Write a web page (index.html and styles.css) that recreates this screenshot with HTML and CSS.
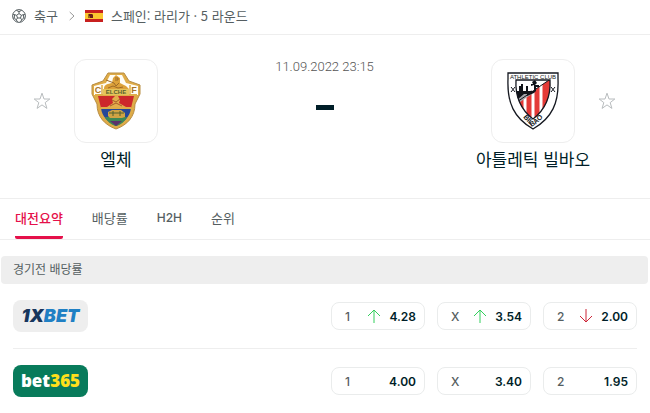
FILE: index.html
```html
<!DOCTYPE html>
<html lang="ko">
<head>
<meta charset="utf-8">
<meta name="viewport" content="width=device-width, initial-scale=1">
<title>엘체 - 아틀레틱 빌바오</title>
<link rel="stylesheet" href="styles.css">
</head>
<body>
<nav class="breadcrumb" aria-label="경로">
  <svg class="ball" viewBox="0 0 14 14" aria-hidden="true"><circle cx="7" cy="7" r="6.4"/><path d="M7 4.6 9.4 6.3 8.5 9H5.5L4.6 6.3ZM7 4.6V2.7M9.4 6.3l2-.7M8.5 9l1.2 1.8M5.5 9l-1.2 1.8M4.6 6.3l-2-.7M4.3 1.3 7 2.7l2.7-1.4M13.1 5.2l-1.7.4.4 3.4 1 .4M8.5 13l1.2-2.2 2.1-1.8M5.5 13l-1.2-2.2L2.2 9l-1 .4M.9 5.2l1.7.4L2.2 9"/></svg>
  <a href="#">축구</a>
  <svg class="chevron" viewBox="0 0 6 10" aria-hidden="true"><path d="M.7 1 5 5 .7 9"/></svg>
  <svg class="flag" viewBox="0 0 18 12" aria-hidden="true"><path fill="#c8201f" d="M0 0h18v12H0z"/><path fill="#fcc630" d="M0 3h18v6H0z"/><path fill="#9c6b18" d="M3 4h5v4H3z"/><path fill="#6b1d18" d="M4 4h3v1h1v3H5V6H4z"/></svg>
  <a href="#">스페인: 라리가 · 5 라운드</a>
</nav>

<header class="match">
  <button class="star" aria-label="엘체 즐겨찾기"><svg viewBox="0 0 18 18"><path d="M9 1.2 11 7h5.8l-4.6 3.6 1.7 5.8L9 12.9l-4.9 3.5 1.7-5.8L1.2 7H7Z"/></svg></button>
  <div class="team">
    <a class="crest" href="#" aria-label="엘체">
      <svg viewBox="0 0 60 60" aria-hidden="true">
        <path d="M22 2h16l5 8 11 4v9l-5 10c0 13-8 21-19 25C19 54 11 46 11 33L6 23v-9l11-4Z" fill="#dfac48" stroke="#b88d43"/>
        <path d="M24 4h12l4 8 12 3v9H8v-9l12-3Z" fill="#fffdf5"/>
        <path d="M12 25h36l-3 12H15Z" fill="#cc282b"/>
        <path d="M15 37h30c-1 9-7 14-15 18-8-4-14-9-15-18Z" fill="#254798"/>
        <path d="M19 46h22c-2 4-6 8-11 9-5-1-9-5-11-9Z" fill="#3d8855"/>
        <path d="m24 50 6 5 6-5Z" fill="#5b326c"/>
        <path d="M18 18c0-5 4-5 8-6l1-5 3-3 4 3v5l6 3 3 3Z" fill="#dda23a"/>
        <path d="m20 9 8 3 2 3 3-3M22 17l5-2 5 2 5-1M29 7h3v2h-3" stroke="#9f6b27"/>
        <path d="m21 36 6-4-1-4 3-3h3l2 4-1 3 7 4Z" fill="#e3ad4b"/>
        <path d="m26 29 4 2 4-3M24 35l6-3 6 3" stroke="#a65c29"/>
        <path d="M22 45v-4l4-2h9l4 3v4l-3 1H24Z" fill="#d0a344"/>
        <path d="M23 42h15M27 40v5M34 40v5" stroke="#50602f"/>
        <path d="M15 37h30M9 24h42" stroke="#dfac48" stroke-width="2"/>
        <path d="M17 18h26v6H17z" fill="#e5c45b"/>
        <path d="M16 14v10M44 14v10" stroke="#dfac48" stroke-width="1.5"/>
        <g class="crest-gold"><text x="12" y="22">C</text><text x="48" y="22">F</text></g>
        <text class="crest-elche" x="30" y="23">ELCHE</text>
      </svg>
    </a>
    <a class="team-name" href="#">엘체</a>
  </div>
  <div class="score">
    <time datetime="2022-09-11T23:15">11.09.2022 23:15</time>
    <span class="dash" role="img" aria-label="점수 없음"></span>
  </div>
  <div class="team">
    <a class="crest" href="#" aria-label="아틀레틱 빌바오">
      <svg viewBox="0 0 60 60" aria-hidden="true">
        <defs><clipPath id="shield"><path d="M13 9h34c1 17-4 29-17 39C17 38 12 26 13 9Z"/></clipPath><path id="motto" d="M15 38Q21 50 30 55Q39 50 45 38"/></defs>
        <path d="M5 2h50v6c1 24-6 39-25 50C11 47 4 32 5 8Z" fill="#fff" stroke="#151820" stroke-width="1.3"/>
        <g clip-path="url(#shield)">
          <path d="M11 7h38v44H11z" fill="#fff"/>
          <path d="M11 33 49 7v44H11Z" fill="#e43a37"/>
          <path d="M22 24v27M30 19v32M38 14v37" stroke="#fff" stroke-width="3"/>
          <path d="M12 27 29 19v4L14 33Z" fill="#a4a6aa"/>
          <path d="M13 24v-4h3v-5h2v-2h2v7h3v-5h2v8h-4l-7 6ZM29 11l3-2 2 3-2 2h4v2h-3v4l-2 2v-8l-3 1v-2h2ZM24 20h7v2l-7 3Z" fill="#101319"/>
          <path d="M11 33 49 7" stroke="#151820"/>
        </g>
        <path d="M13 9h34c1 17-4 29-17 39C17 38 12 26 13 9Z" stroke="#151820" stroke-width="1.3"/>
        <path d="m8 16 4 5m0-5-4 5M48 16l4 5m0-5-4 5" stroke="#151820"/>
        <text class="crest-club" x="30" y="8">ATHLETIC CLUB</text>
        <text class="crest-motto"><textPath href="#motto" startOffset="50%">BILBAO</textPath></text>
      </svg>
    </a>
    <a class="team-name" href="#">아틀레틱 빌바오</a>
  </div>
  <button class="star" aria-label="아틀레틱 빌바오 즐겨찾기"><svg viewBox="0 0 18 18"><path d="M9 1.2 11 7h5.8l-4.6 3.6 1.7 5.8L9 12.9l-4.9 3.5 1.7-5.8L1.2 7H7Z"/></svg></button>
</header>

<nav class="tabs" aria-label="경기 정보">
  <a class="active" href="#" aria-current="page">대전요약</a>
  <a href="#">배당률</a>
  <a class="latin" href="#">H2H</a>
  <a href="#">순위</a>
</nav>

<main>
  <h2 class="section-title">경기전 배당률</h2>
  <ul class="odds">
    <li class="odds-row">
      <a class="bookmaker onexbet" href="#"><span>1X</span>BET</a>
      <div class="prices">
        <button class="price"><span class="pick">1</span><svg class="trend up" viewBox="0 0 14 16" aria-label="상승"><path d="M7 15V2M1 8l6-6 6 6"/></svg><span>4.28</span></button>
        <button class="price"><span class="pick">X</span><svg class="trend up" viewBox="0 0 14 16" aria-label="상승"><path d="M7 15V2M1 8l6-6 6 6"/></svg><span>3.54</span></button>
        <button class="price"><span class="pick">2</span><svg class="trend down" viewBox="0 0 14 16" aria-label="하락"><path d="M7 1v13M1 8l6 6 6-6"/></svg><span>2.00</span></button>
      </div>
    </li>
    <li class="odds-row">
      <a class="bookmaker bet365" href="#">bet<span>365</span></a>
      <div class="prices">
        <button class="price"><span class="pick">1</span><span>4.00</span></button>
        <button class="price"><span class="pick">X</span><span>3.40</span></button>
        <button class="price"><span class="pick">2</span><span>1.95</span></button>
      </div>
    </li>
  </ul>
</main>
</body>
</html>
```
FILE: styles.css
```css
* { box-sizing: border-box; }

body {
  margin: 0;
  background: #fff;
  color: #001e28;
  font-family: Inter, "Noto Sans CJK KR", sans-serif;
  font-size: 12px;
}

a { color: inherit; text-decoration: none; }
button { font: inherit; color: inherit; background: none; cursor: pointer; }
svg { display: block; flex: none; fill: none; }

.breadcrumb {
  display: flex;
  align-items: center;
  height: 35px;
  padding: 0 12px 3px;
  border-bottom: 1px solid #eee;
  color: #555e61;
  font-family: "Noto Sans CJK KR", sans-serif;
  font-size: 13px;
}
.ball { width: 14px; height: 14px; margin-right: 8px; stroke: #555e61; stroke-width: 1; }
.chevron { width: 6px; height: 10px; margin: 0 10px 0 11px; stroke: #999; }
.flag { width: 18px; height: 12px; margin-right: 8px; }

.match {
  display: flex;
  justify-content: space-between;
  padding: 24px 34px 27px 33px;
  border-bottom: 1px solid #eee;
}
.star { width: 18px; height: 84px; padding: 0; border: 0; }
.star svg { width: 18px; height: 18px; stroke: #b8bcbe; }
.team {
  display: flex;
  flex-direction: column;
  align-items: center;
  width: 130px;
}
.crest {
  display: grid;
  place-items: center;
  width: 84px;
  height: 84px;
  border: 1px solid #eee;
  border-radius: 12px;
}
.crest svg { width: 60px; height: 60px; }
.crest text { font-family: "Liberation Sans", sans-serif; text-anchor: middle; }
.crest-gold { fill: #a8742a; font-size: 9px; font-weight: 700; }
.crest-elche { fill: #59602d; font-size: 6px; font-weight: 700; }
.crest-club { fill: #151820; font-size: 6px; }
.crest-motto { fill: #151820; font-size: 7px; font-weight: 700; }
.team-name {
  margin-top: 4px;
  font-family: "Noto Sans CJK KR", sans-serif;
  font-size: 17px;
  line-height: 24px;
  white-space: nowrap;
}
.score { flex: 1; display: flex; flex-direction: column; align-items: center; }
.score time { color: #555; font-family: Roboto, sans-serif; font-size: 13px; font-weight: 300; line-height: 16px; }
.dash { width: 18px; height: 5px; margin-top: 30px; background: #001e28; }

.tabs {
  display: flex;
  gap: 29px;
  height: 41px;
  padding: 0 15px;
  border-bottom: 1px solid #eee;
  color: #555e61;
  font-size: 13px;
  line-height: 38px;
}
.tabs a { border-bottom: 3px solid transparent; }
.tabs .active { border-color: #e5104a; border-radius: 2px; color: #e5104a; font-weight: 500; }
.tabs .latin { font-size: 12px; font-weight: 500; }

.section-title {
  margin: 16px 2px 0 1px;
  padding: 0 12px;
  border-radius: 4px;
  background: #eee;
  color: #555e61;
  font-size: 12px;
  font-weight: 400;
  line-height: 28px;
}

.odds { margin: 0 13px; padding: 0; list-style: none; }
.odds-row {
  display: flex;
  align-items: center;
  justify-content: space-between;
  padding: 16px 0;
}
.odds-row + .odds-row { border-top: 1px solid #eee; }
.bookmaker {
  width: 75px;
  height: 32px;
  border-radius: 8px;
  line-height: 32px;
  text-align: center;
}
.onexbet { background: #eee; color: #1f80c4; font-size: 18px; font-style: italic; font-weight: 900; }
.onexbet span { color: #17365d; }
.bet365 { background: #087b5b; color: #fff; font-family: "Open Sans", sans-serif; font-size: 17px; font-weight: 800; }
.bet365 span { color: #ffdf1b; }
.prices { display: flex; gap: 12px; }
.price {
  display: flex;
  align-items: center;
  justify-content: space-between;
  width: 94px;
  height: 28px;
  padding: 0 8px 0 13px;
  border: 1px solid #eaecec;
  border-radius: 8px;
  font-weight: 600;
}
.pick { color: #555e61; font-weight: 500; }
.trend { width: 14px; height: 16px; margin-left: auto; margin-right: 8px; }
.up { stroke: #32cf5c; }
.down { stroke: #cc2537; }
```
